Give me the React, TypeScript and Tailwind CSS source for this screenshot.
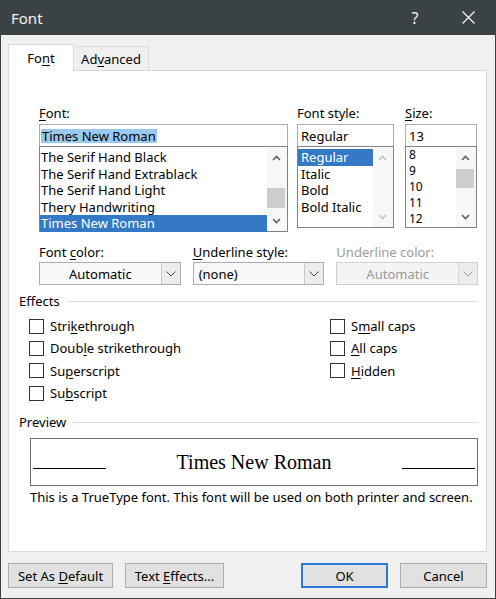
import React from 'react';

// access-key label: underlines one character of the text
const Key = ({ text, at }: { text: string; at?: number }) => {
    if (at === undefined) return <span>{text}</span>;
    return (
        <span>
            {text.slice(0, at)}
            <span className="underline underline-offset-2">{text[at]}</span>
            {text.slice(at + 1)}
        </span>
    );
};

const Chevron = ({ up, color = '#5f5f5f', w = 9 }: { up?: boolean; color?: string; w?: number }) => (
    <svg width={w} height="6" viewBox="0 0 9 6" fill="none">
        <path d={up ? 'M1 5 L4.5 1.5 L8 5' : 'M1 1 L4.5 4.5 L8 1'} stroke={color} strokeWidth="1.6" />
    </svg>
);

const ComboArrow = ({ color = '#444' }: { color?: string }) => (
    <svg width="10" height="6" viewBox="0 0 10 6" fill="none">
        <path d="M0.5 0.5 L5 5 L9.5 0.5" stroke={color} strokeWidth="1" />
    </svg>
);

interface ScrollProps {
    thumbTop?: number;
    thumbH?: number;
    disabled?: boolean;
}

const ScrollBar: React.FC<ScrollProps> = ({ thumbTop, thumbH, disabled }) => {
    const c = disabled ? '#c4c4c4' : '#606060';
    return (
        <div className="w-[20px] flex flex-col bg-[#f7f7f7] py-[1px] pr-[2px]">
            <div className="h-[20px] flex items-center justify-center"><Chevron up color={c} /></div>
            <div className="flex-1 relative">
                {thumbH ? (
                    <div className="absolute left-0 right-0 bg-[#cdcdcd]" style={{ top: thumbTop, height: thumbH }} />
                ) : null}
            </div>
            <div className="h-[19px] flex items-center justify-center"><Chevron color={c} /></div>
        </div>
    );
};

const fontNames = [
    'The Serif Hand Black',
    'The Serif Hand Extrablack',
    'The Serif Hand Light',
    'Thery Handwriting',
    'Times New Roman',
];

const styles = ['Regular', 'Italic', 'Bold', 'Bold Italic'];
const sizes = ['8', '9', '10', '11', '12'];

const Combo = ({ value, disabled, center }: { value: string; disabled?: boolean; center?: boolean }) => (
    <div className={`h-[23px] flex border ${disabled ? 'border-[#cfcfcf] bg-[#f4f4f4] text-[#9a9a9a]' : 'border-[#adadad] bg-[#f9f9f9]'}`}>
        <div className={`flex-1 flex items-center ${center ? 'justify-center' : 'pl-[5px]'}`}>{value}</div>
        <div className={`w-[19px] flex items-center justify-center border-l ${disabled ? 'border-[#d8d8d8]' : 'border-[#c8c8c8]'} bg-[#ececec]`}>
            <ComboArrow color={disabled ? '#9a9a9a' : '#444'} />
        </div>
    </div>
);

const Check = ({ text, at }: { text: string; at: number }) => (
    <div className="h-[22.3px] flex items-center">
        <div className="w-[15px] h-[15px] border border-[#333] bg-white" />
        <span className="ml-[6px]"><Key text={text} at={at} /></span>
    </div>
);

const GroupHeader = ({ title }: { title: string }) => (
    <div className="flex items-center h-[16px]">
        <span>{title}</span>
        <div className="flex-1 ml-[7px] h-px bg-[#dcdcdc]" />
    </div>
);

const Button = ({ children, w, primary }: { children: React.ReactNode; w: string; primary?: boolean }) => (
    <button
        className={`${w} h-[25px] flex items-center justify-center bg-[#e1e1e1] ${primary ? 'border-2 border-[#2c7ad1]' : 'border border-[#adadad]'}`}
    >
        {children}
    </button>
);

export default function App() {
    return (
        <div className="w-[496px] h-[599px] flex flex-col bg-[#f0f0f0] border-x border-b border-[#3b4245] overflow-hidden text-[13px] leading-[16px] text-black font-['Noto_Sans',sans-serif]">
            {/* title bar */}
            <div className="h-[35px] shrink-0 flex items-center bg-[#3b4245] text-[#f2f2f2] pl-[10px] pr-[4px]">
                <span className="text-[15px]">Font</span>
                <div className="ml-auto flex">
                    <div className="w-[46px] h-[35px] mr-[7px] flex items-center justify-center text-[16px]">?</div>
                    <div className="w-[46px] h-[35px] flex items-center justify-center">
                        <svg width="13" height="13" viewBox="0 0 13 13">
                            <path d="M0.5 0.5 L12.5 12.5 M12.5 0.5 L0.5 12.5" stroke="#f2f2f2" strokeWidth="1.3" />
                        </svg>
                    </div>
                </div>
            </div>

            <div className="flex flex-col px-[7px] pt-[9px]">
                {/* tabs */}
                <div className="flex items-end h-[26px]">
                    <div className="relative z-10 -mb-px w-[66px] h-[27px] bg-white border border-b-0 border-[#d9d9d9] flex items-center justify-center pb-[1px]">
                        <Key text="Font" at={2} />
                    </div>
                    <div className="w-[75px] h-[24px] border border-l-0 border-b-0 border-[#d9d9d9] flex items-center justify-center pt-[1px]">
                        <Key text="Advanced" at={2} />
                    </div>
                </div>

                {/* tab panel */}
                <div className="w-[479px] h-[482px] bg-white border border-[#d9d9d9] pt-[34px] pl-[10px] pr-[8px] flex flex-col">
                    <div className="ml-[20px] flex">
                        <div className="w-[249px] flex flex-col">
                            <div className="h-[16px] mb-[3px]"><Key text="Font:" at={0} /></div>
                            <div className="h-[23px] border border-[#adadad] flex items-center pl-[1px]">
                                <span className="bg-[#99c9ef] px-[1px] leading-[14px]">Times New Roman</span>
                            </div>
                            <div className="h-[86px] -mt-px border border-[#828282] flex">
                                <div className="flex-1 flex flex-col pt-[2px]">
                                    {fontNames.map((n, i) => (
                                        <div
                                            key={n}
                                            className={`h-[16.5px] leading-[16.5px] pl-[1px] ${i === 4 ? 'bg-[#3479c6] text-white' : ''}`}
                                        >
                                            {n}
                                        </div>
                                    ))}
                                </div>
                                <ScrollBar thumbTop={20} thumbH={20} />
                            </div>
                        </div>

                        <div className="w-[97px] ml-[9px] flex flex-col">
                            <div className="h-[16px] mb-[3px]">Font style:</div>
                            <div className="h-[23px] border border-[#adadad] flex items-center pl-[3px]">Regular</div>
                            <div className="h-[82px] -mt-px border border-[#828282] flex">
                                <div className="flex-1 flex flex-col pt-[2px]">
                                    {styles.map((s, i) => (
                                        <div
                                            key={s}
                                            className={`h-[16.5px] leading-[16.5px] pl-[3px] ${i === 0 ? 'bg-[#3479c6] text-white' : ''}`}
                                        >
                                            {s}
                                        </div>
                                    ))}
                                </div>
                                <ScrollBar disabled />
                            </div>
                        </div>

                        <div className="w-[72px] ml-[11px] flex flex-col">
                            <div className="h-[16px] mb-[3px]"><Key text="Size:" at={0} /></div>
                            <div className="h-[23px] border border-[#adadad] flex items-center pl-[3px]">13</div>
                            <div className="h-[82px] -mt-px border border-[#828282] flex">
                                <div className="flex-1 flex flex-col overflow-hidden text-[12px]">
                                    {sizes.map(s => (
                                        <div key={s} className="h-[16px] leading-[16px] pl-[3px]">{s}</div>
                                    ))}
                                </div>
                                <ScrollBar thumbTop={1} thumbH={19} />
                            </div>
                        </div>
                    </div>

                    {/* colour / underline row */}
                    <div className="ml-[20px] mt-[12px] flex gap-[12px]">
                        <div className="w-[142px]">
                            <div className="h-[16px] mb-[2px]"><Key text="Font color:" at={5} /></div>
                            <Combo value="Automatic" center />
                        </div>
                        <div className="w-[132px]">
                            <div className="h-[16px] mb-[2px]"><Key text="Underline style:" at={0} /></div>
                            <Combo value="(none)" />
                        </div>
                        <div className="w-[142px]">
                            <div className="h-[16px] mb-[2px] text-[#9a9a9a]">Underline color:</div>
                            <Combo value="Automatic" center disabled />
                        </div>
                    </div>

                    {/* effects */}
                    <div className="mt-[8px]">
                        <GroupHeader title="Effects" />
                    </div>
                    <div className="mt-[6px] ml-[10px] flex">
                        <div className="w-[301px] flex flex-col">
                            <Check text="Strikethrough" at={4} />
                            <Check text="Double strikethrough" at={4} />
                            <Check text="Superscript" at={2} />
                            <Check text="Subscript" at={2} />
                        </div>
                        <div className="flex flex-col">
                            <Check text="Small caps" at={1} />
                            <Check text="All caps" at={0} />
                            <Check text="Hidden" at={0} />
                        </div>
                    </div>

                    {/* preview */}
                    <div className="mt-[10px]">
                        <GroupHeader title="Preview" />
                    </div>
                    <div className="mt-[8px] ml-[11px] h-[48px] border border-[#6e6e6e] flex items-center px-[2px]">
                        <div className="w-[73px] self-end mb-[16px] h-[1.5px] bg-black" />
                        <div className="flex-1 text-center text-[20px] leading-[24px] font-['Liberation_Serif',serif]">Times New Roman</div>
                        <div className="w-[73px] self-end mb-[16px] h-[1.5px] bg-black" />
                    </div>
                    <div className="mt-[3px] ml-[11px]">This is a TrueType font. This font will be used on both printer and screen.</div>
                </div>

                {/* dialog buttons */}
                <div className="w-[479px] mt-[11px] flex">
                    <Button w="w-[105px]"><Key text="Set As Default" at={7} /></Button>
                    <Button w="w-[99px] ml-[12px]"><Key text="Text Effects..." at={5} /></Button>
                    <Button w="w-[87px] ml-auto" primary>OK</Button>
                    <Button w="w-[87px] ml-[12px]">Cancel</Button>
                </div>
            </div>
        </div>
    );
}
